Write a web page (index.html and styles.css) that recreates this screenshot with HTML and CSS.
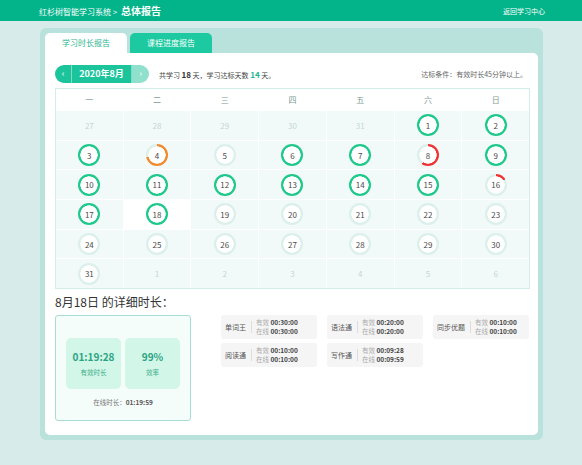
FILE: index.html
```html
<!DOCTYPE html>
<html lang="zh-CN">
<head>
  <meta charset="UTF-8" />
  <title>总体报告</title>
  <link rel="stylesheet" href="styles.css">
</head>
<body>
  <div class="topo">
    <div class="trilha">红杉树智能学习系统 &gt; <strong>总体报告</strong></div>
    <a class="voltar" href="#">返回学习中心</a>
  </div>

  <div class="quadro">
    <div class="abas">
      <div class="aba ativa">学习时长报告</div>
      <div class="aba">课程进度报告</div>
    </div>

    <div class="painel">
      <div class="barra">
        <div class="mes">
          <span class="seta">‹</span>
          <span class="mes-nome">2020年8月</span>
          <span class="seta clara">›</span>
        </div>
        <div class="resumo">共学习 <b>18</b> 天，学习达标天数 <b class="verde">14</b> 天。</div>
        <div class="condicao">达标条件：有效时长45分钟以上。</div>
      </div>

      <div class="calendario">
        <div class="dia-nome">一</div><div class="dia-nome">二</div><div class="dia-nome">三</div><div class="dia-nome">四</div><div class="dia-nome">五</div><div class="dia-nome">六</div><div class="dia-nome">日</div>

        <div class="cel"><span class="fora">27</span></div>
        <div class="cel"><span class="fora">28</span></div>
        <div class="cel"><span class="fora">29</span></div>
        <div class="cel"><span class="fora">30</span></div>
        <div class="cel"><span class="fora">31</span></div>
        <div class="cel"><span class="anel ok"><span class="num">1</span></span></div>
        <div class="cel"><span class="anel ok"><span class="num">2</span></span></div>

        <div class="cel"><span class="anel ok"><span class="num">3</span></span></div>
        <div class="cel"><span class="anel laranja" style="--p:72%"><span class="num">4</span></span></div>
        <div class="cel"><span class="anel"><span class="num">5</span></span></div>
        <div class="cel"><span class="anel ok"><span class="num">6</span></span></div>
        <div class="cel"><span class="anel ok"><span class="num">7</span></span></div>
        <div class="cel"><span class="anel vermelho" style="--p:60%"><span class="num">8</span></span></div>
        <div class="cel"><span class="anel ok"><span class="num">9</span></span></div>

        <div class="cel"><span class="anel ok"><span class="num">10</span></span></div>
        <div class="cel"><span class="anel ok"><span class="num">11</span></span></div>
        <div class="cel"><span class="anel ok"><span class="num">12</span></span></div>
        <div class="cel"><span class="anel ok"><span class="num">13</span></span></div>
        <div class="cel"><span class="anel ok"><span class="num">14</span></span></div>
        <div class="cel"><span class="anel ok"><span class="num">15</span></span></div>
        <div class="cel"><span class="anel vermelho" style="--p:16%"><span class="num">16</span></span></div>

        <div class="cel"><span class="anel ok"><span class="num">17</span></span></div>
        <div class="cel hoje"><span class="anel ok"><span class="num">18</span></span></div>
        <div class="cel"><span class="anel"><span class="num">19</span></span></div>
        <div class="cel"><span class="anel"><span class="num">20</span></span></div>
        <div class="cel"><span class="anel"><span class="num">21</span></span></div>
        <div class="cel"><span class="anel"><span class="num">22</span></span></div>
        <div class="cel"><span class="anel"><span class="num">23</span></span></div>

        <div class="cel"><span class="anel"><span class="num">24</span></span></div>
        <div class="cel"><span class="anel"><span class="num">25</span></span></div>
        <div class="cel"><span class="anel"><span class="num">26</span></span></div>
        <div class="cel"><span class="anel"><span class="num">27</span></span></div>
        <div class="cel"><span class="anel"><span class="num">28</span></span></div>
        <div class="cel"><span class="anel"><span class="num">29</span></span></div>
        <div class="cel"><span class="anel"><span class="num">30</span></span></div>

        <div class="cel"><span class="anel"><span class="num">31</span></span></div>
        <div class="cel"><span class="fora">1</span></div>
        <div class="cel"><span class="fora">2</span></div>
        <div class="cel"><span class="fora">3</span></div>
        <div class="cel"><span class="fora">4</span></div>
        <div class="cel"><span class="fora">5</span></div>
        <div class="cel"><span class="fora">6</span></div>
      </div>

      <h2 class="titulo-detalhe">8月18日 的详细时长：</h2>

      <div class="detalhe">
        <div class="caixa">
          <div class="cartoes">
            <div class="cartao">
              <div class="valor">01:19:28</div>
              <div class="rotulo">有效时长</div>
            </div>
            <div class="cartao">
              <div class="valor">99%</div>
              <div class="rotulo">效率</div>
            </div>
          </div>
          <div class="online">在线时长：<b>01:19:59</b></div>
        </div>

        <div class="cursos">
          <div class="curso">
            <span class="nome">单词王</span>
            <span class="linhas">
              <span><i>有效</i> 00:30:00</span>
              <span><i>在线</i> 00:30:00</span>
            </span>
          </div>
          <div class="curso">
            <span class="nome">语法通</span>
            <span class="linhas">
              <span><i>有效</i> 00:20:00</span>
              <span><i>在线</i> 00:20:00</span>
            </span>
          </div>
          <div class="curso">
            <span class="nome">同步优题</span>
            <span class="linhas">
              <span><i>有效</i> 00:10:00</span>
              <span><i>在线</i> 00:10:00</span>
            </span>
          </div>
          <div class="curso">
            <span class="nome">阅读通</span>
            <span class="linhas">
              <span><i>有效</i> 00:10:00</span>
              <span><i>在线</i> 00:10:00</span>
            </span>
          </div>
          <div class="curso">
            <span class="nome">写作通</span>
            <span class="linhas">
              <span><i>有效</i> 00:09:28</span>
              <span><i>在线</i> 00:09:59</span>
            </span>
          </div>
        </div>
      </div>
    </div>
  </div>
</body>
</html>
```

FILE: styles.css
```css
body {
  margin: 0;
  background: #d7ecea;
  font-family: "Noto Sans CJK SC", "Noto Sans", sans-serif;
  color: #333;
}
.topo {
  height: 21px;
  background: #03b48a;
  color: white;
  display: flex;
  align-items: center;
  justify-content: space-between;
  padding: 0 37px 0 39px;
  font-size: 8px;
}
.topo strong { font-size: 10px; margin-left: 2px; }
.voltar { color: white; text-decoration: none; font-size: 7px; }

.quadro {
  width: 493px;
  margin: 7px 0 0 40px;
  padding: 5px;
  background: #b9e2dc;
  border-radius: 6px;
}
.abas { display: flex; gap: 3px; }
.aba {
  width: 82px;
  height: 20px;
  line-height: 20px;
  text-align: center;
  font-size: 8px;
  border-radius: 5px 5px 0 0;
  background: #1cc9a0;
  color: white;
}
.aba.ativa { background: white; color: #2db792; }

.painel {
  background: white;
  border-radius: 0 5px 5px 5px;
  padding: 12px 8px 14px 10px;
  height: 356px;
}

.barra {
  display: flex;
  align-items: center;
  height: 18px;
  font-size: 7px;
  color: #444;
}
.mes {
  display: flex;
  height: 18px;
  border-radius: 9px;
  overflow: hidden;
  color: white;
  margin-right: 10px;
}
.seta {
  width: 16px;
  background: #1bc49b;
  text-align: center;
  line-height: 17px;
  font-size: 9px;
}
.seta.clara { background: #8fe0cc; width: 17px; }
.mes-nome {
  width: 59px;
  background: #1bc49b;
  border-left: 1px solid #7fdcc3;
  border-right: 1px solid #7fdcc3;
  text-align: center;
  font-size: 9px;
  font-weight: bold;
  line-height: 18px;
}
.resumo b { font-size: 8px; color: #333; }
.resumo b.verde { color: #1cb98f; }
.condicao { margin-left: auto; margin-right: 3px; color: #666; }

.calendario {
  margin-top: 5px;
  display: grid;
  grid-template-columns: repeat(7, 1fr);
  grid-template-rows: 21px repeat(6, 28.7px);
  gap: 1px;
  background: white;
  border: 1px solid #d2eee8;
}
.dia-nome {
  display: flex;
  align-items: center;
  justify-content: center;
  font-size: 8px;
  color: #7d9b94;
  background: white;
}
.cel {
  background: #f1faf8;
  display: flex;
  align-items: center;
  justify-content: center;
}
.cel.hoje { background: white; }
.fora { font-size: 8px; color: #c4d7d2; }

.anel {
  --c: #dcf0eb;
  --p: 0%;
  width: 22px;
  height: 22px;
  border-radius: 50%;
  display: flex;
  align-items: center;
  justify-content: center;
  background:
    radial-gradient(circle, #fff 8.4px, transparent 8.9px),
    conic-gradient(var(--c) var(--p), #dcf0eb 0);
}
.anel.ok { --c: #1fc98b; --p: 100%; }
.anel.laranja { --c: #f28a2c; }
.anel.vermelho { --c: #ee3434; }
.num { font-size: 8px; color: #4a4a4a; }

.titulo-detalhe {
  margin: 5px 0 5px 0;
  font-size: 12px;
  font-weight: normal;
  color: #333;
  line-height: 16px;
}

.detalhe { display: flex; gap: 30px; align-items: flex-start; }
.caixa {
  width: 134px;
  height: 104px;
  border: 1px solid #a5ddd0;
  border-radius: 3px;
  background: #f5fdfb;
}
.cartoes {
  display: flex;
  gap: 4px;
  padding: 22px 0 0 10px;
}
.cartao {
  width: 55px;
  height: 51px;
  border-radius: 5px;
  background: #d2f6e7;
  display: flex;
  flex-direction: column;
  align-items: center;
  justify-content: center;
}
.valor { font-size: 10px; font-weight: bold; color: #2ba483; line-height: 14px; }
.rotulo { font-size: 6.5px; color: #3dae8b; margin-top: 3px; }
.online {
  text-align: center;
  font-size: 6.5px;
  color: #777;
  margin-top: 8px;
}
.online b { color: #555; }

.cursos {
  display: grid;
  grid-template-columns: repeat(3, 96px);
  grid-auto-rows: 24px;
  column-gap: 10px;
  row-gap: 4px;
}
.curso {
  background: #f5f5f5;
  border-radius: 3px;
  display: flex;
  align-items: center;
  padding-left: 4px;
}
.nome {
  font-size: 7px;
  color: #555;
  padding-right: 5px;
  border-right: 1px solid #ddd;
  line-height: 12px;
  margin-right: 4px;
}
.linhas {
  display: flex;
  flex-direction: column;
  font-size: 6.5px;
  font-weight: bold;
  color: #444;
  line-height: 9px;
}
.linhas i { font-style: normal; font-weight: normal; color: #aaa; }
```
